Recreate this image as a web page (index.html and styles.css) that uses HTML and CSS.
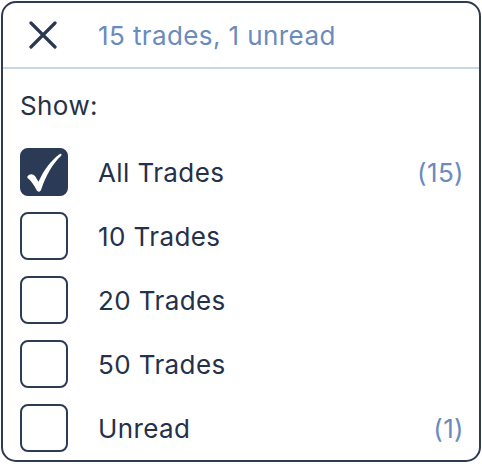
FILE: index.html
```html
<!DOCTYPE html>
<html lang="en">
<head>
    <meta charset="UTF-8">
    <meta name="viewport" content="width=device-width, initial-scale=1.0">
    <title>Trade filter</title>
    <link rel="stylesheet" href="styles.css">
</head>
<body>
    <div class="panel">
        <div class="header">
            <span class="close">
                <svg width="28" height="28" viewBox="0 0 28 28">
                    <path d="M2 2 L26 26 M26 2 L2 26" stroke="#2b3850" stroke-width="3.2" stroke-linecap="round"/>
                </svg>
            </span>
            <span class="summary">15 trades, 1 unread</span>
        </div>
        <div class="content">
            <div class="show">Show:</div>
            <div class="options">
                <div class="option">
                    <span class="box checked">
                        <svg width="38" height="42" viewBox="0 0 34 38">
                            <path d="M2 22 C4 19.5 7 19.5 9 22 L12 27 C17 16 23 8 31 2 C32.5 1 33.5 2.5 32.5 3.5 C24.5 11 18.5 22 14.5 34 C13.8 36.5 11 36.5 10 34 C8 30 5.5 26 2 23.5 Z" fill="#fff"/>
                        </svg>
                    </span>
                    <span class="label">All Trades</span>
                    <span class="count">(15)</span>
                </div>
                <div class="option">
                    <span class="box"></span>
                    <span class="label">10 Trades</span>
                </div>
                <div class="option">
                    <span class="box"></span>
                    <span class="label">20 Trades</span>
                </div>
                <div class="option">
                    <span class="box"></span>
                    <span class="label">50 Trades</span>
                </div>
                <div class="option">
                    <span class="box"></span>
                    <span class="label">Unread</span>
                    <span class="count">(1)</span>
                </div>
            </div>
        </div>
    </div>
</body>
</html>
```

FILE: styles.css
```css
body {
    margin: 0;
    padding: 0;
    background: #fff;
    font-family: Inter, "Noto Sans", sans-serif;
    color: #243149;
}
.panel {
    box-sizing: border-box;
    width: 480px;
    height: 461px;
    margin: 1px;
    border: 2px solid #2e3b53;
    border-radius: 15px;
    overflow: hidden;
}
.header {
    display: flex;
    align-items: center;
    height: 64px;
    border-bottom: 2px solid #c9d6e4;
}
.close {
    display: flex;
    width: 28px;
    height: 28px;
    margin-left: 26px;
    margin-right: 41px;
}
.summary {
    font-size: 26px;
    letter-spacing: 0.4px;
    color: #6a8bbd;
}
.content {
    padding: 21px 15px 0 17px;
}
.show {
    font-size: 26px;
    letter-spacing: 0.4px;
    line-height: 32px;
}
.options {
    display: flex;
    flex-direction: column;
    gap: 16px;
    margin-top: 26px;
}
.option {
    display: flex;
    align-items: center;
    height: 48px;
}
.box {
    box-sizing: border-box;
    width: 48px;
    height: 48px;
    border: 2px solid #2e3b53;
    border-radius: 8px;
    display: flex;
    align-items: center;
    justify-content: center;
}
.box.checked {
    background: #2b3a55;
    border-color: #2b3a55;
}
.box.checked svg {
    margin-top: 1px;
}
.label {
    font-size: 26px;
    letter-spacing: 0.4px;
    margin-left: 30px;
    flex: 1;
}
.count {
    font-size: 26px;
    letter-spacing: 0.4px;
    color: #6a8bbd;
}
```
